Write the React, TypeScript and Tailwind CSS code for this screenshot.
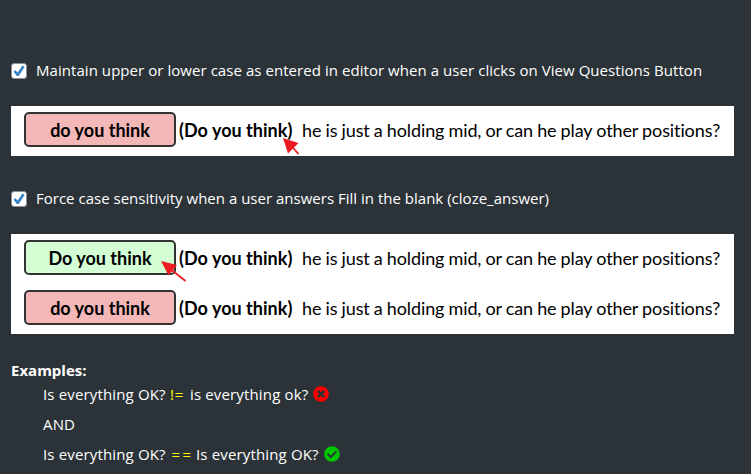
import type { ReactNode } from "react";
import { FaCheckCircle, FaTimesCircle } from "react-icons/fa";

function Option({ children }: { children: ReactNode }) {
  return (
    <label className="flex h-6 items-center whitespace-nowrap">
      <span className="mr-[9px] flex size-4 shrink-0 items-center justify-center rounded-[3px] border border-[#8c8f94] bg-white">
        <svg viewBox="0 0 14 14" className="size-[14px]" fill="#3582c4">
          <path d="M10.4 1.6 L12.6 2.8 L6.7 12 L5 12 L1.6 7.7 L3.2 6.2 L5.7 8.5 Z" />
        </svg>
      </span>
      {children}
    </label>
  );
}

function LongArrow() {
  return (
    <svg viewBox="0 0 26 22" className="absolute left-[150px] top-[27px] h-[22px] w-[26px]">
      <path d="M10 8.5 L24.5 20" stroke="#ed1c24" strokeWidth="1.8" />
      <path d="M0 0 L16 4 L7.5 14.5 Z" fill="#ed1c24" />
    </svg>
  );
}

function ShortArrow() {
  return (
    <svg viewBox="0 0 17 17" className="absolute left-[272px] top-[32px] size-[17px]">
      <path d="M8 7.5 L15.5 16" stroke="#ed1c24" strokeWidth="1.8" />
      <path d="M0 0 L15.5 5 L5 15.5 Z" fill="#ed1c24" />
    </svg>
  );
}

function Sentence({ answer, correct }: { answer: string; correct?: boolean }) {
  return (
    <div className="flex h-[50px] items-center whitespace-nowrap pb-[3px] pl-[13px] font-['Lato',sans-serif] text-[18px] text-black">
      <span
        className={`flex h-[35px] w-[152px] shrink-0 items-center justify-center rounded-[5px] border-2 border-[#333] pt-[2px] font-bold ${correct ? "bg-[#d4fed4]" : "bg-[#f3b7b7]"}`}
      >
        {answer}
      </span>
      <span className="ml-[3px] w-[123px] shrink-0 pt-px font-bold tracking-[0.03px]">(Do you think)</span>
      <span className="pt-px tracking-[-0.1px] [word-spacing:-0.4px]">
        he is just a holding mid, or can he play other positions?
      </span>
    </div>
  );
}

export default function App() {
  return (
    <main className="h-[474px] w-[751px] overflow-hidden bg-[#2c3338] pl-[11px] pt-[59px] font-['Open_Sans',sans-serif] text-[15px] text-white">
      <Option>
        <span className="pb-[2px] tracking-[0.055px]">
          Maintain upper or lower case as entered in editor when a user clicks on View Questions Button
        </span>
      </Option>
      <section className="relative mt-[23px] w-[723px] bg-white">
        <Sentence answer="do you think" />
        <ShortArrow />
      </section>
      <div className="mt-[31px]">
        <Option>
          <span className="pb-[2px] tracking-[0.01px]">
            Force case sensitivity when a user answers Fill in the blank (cloze_answer)
          </span>
        </Option>
      </div>
      <section className="relative mt-[23px] w-[723px] bg-white">
        <Sentence answer="Do you think" correct />
        <Sentence answer="do you think" />
        <LongArrow />
      </section>
      <h2 className="mt-[25px] h-[22px] text-[15px] font-bold leading-[22px]">Examples:</h2>
      <div className="-mt-[2px] pl-8 leading-[30px] tracking-[0.15px]">
        <p className="flex h-[30px] items-center whitespace-pre">
          <span className="w-[127px]">Is everything OK?</span>
          <span className="w-5 tracking-[0.9px] text-[#ffff00]">!=</span>
          <span className="w-[119px]">is everything ok?</span>
          <FaTimesCircle className="ml-1 size-4 text-[#ff0000]" />
        </p>
        <p className="h-[30px]">AND</p>
        <p className="flex h-[30px] items-center whitespace-pre">
          <span className="w-[127px]">Is everything OK?</span>
          <span className="w-[26px] pl-[1.5px] tracking-[2.5px] text-[#ffff00]">==</span>
          <span className="w-[123px]">Is everything OK?</span>
          <FaCheckCircle className="ml-[5px] size-4 text-[#00c800]" />
        </p>
      </div>
    </main>
  );
}
